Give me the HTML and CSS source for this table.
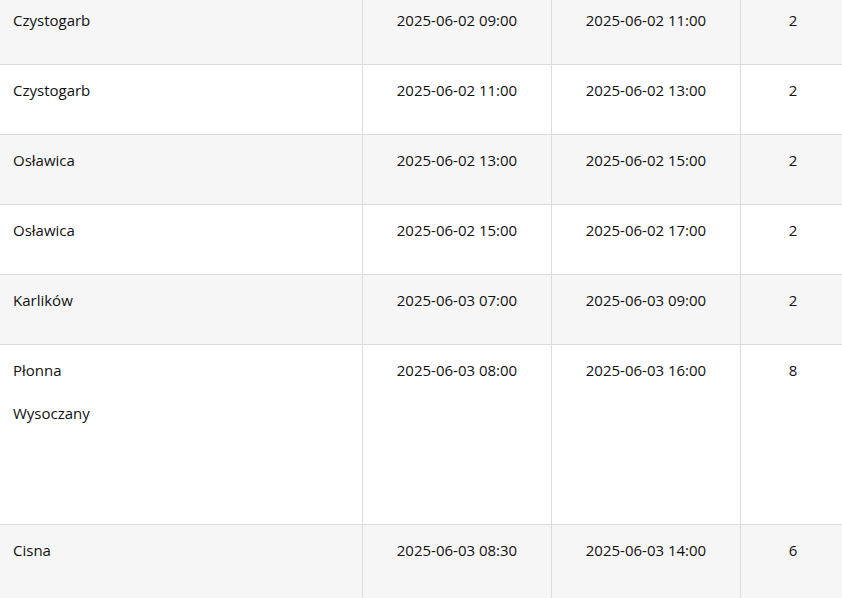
FILE: index.html
```html
<!DOCTYPE html>
<html lang="pl">
<head>
<meta charset="utf-8">
<title>Harmonogram</title>
<link rel="stylesheet" href="styles.css">
</head>
<body>
<div class="table">
  <div class="row alt">
    <div class="cell name">Czystogarb</div>
    <div class="cell">2025-06-02 09:00</div>
    <div class="cell">2025-06-02 11:00</div>
    <div class="cell">2</div>
  </div>
  <div class="row">
    <div class="cell name">Czystogarb</div>
    <div class="cell">2025-06-02 11:00</div>
    <div class="cell">2025-06-02 13:00</div>
    <div class="cell">2</div>
  </div>
  <div class="row alt">
    <div class="cell name">Osławica</div>
    <div class="cell">2025-06-02 13:00</div>
    <div class="cell">2025-06-02 15:00</div>
    <div class="cell">2</div>
  </div>
  <div class="row">
    <div class="cell name">Osławica</div>
    <div class="cell">2025-06-02 15:00</div>
    <div class="cell">2025-06-02 17:00</div>
    <div class="cell">2</div>
  </div>
  <div class="row alt">
    <div class="cell name">Karlików</div>
    <div class="cell">2025-06-03 07:00</div>
    <div class="cell">2025-06-03 09:00</div>
    <div class="cell">2</div>
  </div>
  <div class="row tall">
    <div class="cell name">
      <div class="place">Płonna</div>
      <div class="place">Wysoczany</div>
    </div>
    <div class="cell">2025-06-03 08:00</div>
    <div class="cell">2025-06-03 16:00</div>
    <div class="cell">8</div>
  </div>
  <div class="row alt last">
    <div class="cell name">Cisna</div>
    <div class="cell">2025-06-03 08:30</div>
    <div class="cell">2025-06-03 14:00</div>
    <div class="cell">6</div>
  </div>
</div>
</body>
</html>
```

FILE: styles.css
```css
html, body {
  margin: 0;
  padding: 0;
  background: #ffffff;
  overflow: hidden;
}
body {
  font-family: "Open Sans", "Noto Sans", "Liberation Sans", sans-serif;
  font-size: 15px;
  color: #111111;
}
.table {
  width: 845px;
  margin-top: -5px;
}
.row {
  display: grid;
  grid-template-columns: 363px 189px 189px 1fr;
  height: 70px;
  box-sizing: border-box;
  border-bottom: 1px solid #dcdcdc;
  background: #ffffff;
}
.row.alt {
  background: #f6f6f6;
}
.row.tall {
  height: 180px;
}
.row.last {
  height: 90px;
}
.cell {
  box-sizing: border-box;
  padding: 15px 12px 0;
  line-height: 20px;
  text-align: center;
  border-right: 1px solid #dcdcdc;
}
.cell:last-child {
  border-right: none;
}
.cell.name {
  text-align: left;
  padding-left: 13px;
}
.place {
  margin-bottom: 23px;
}
```
